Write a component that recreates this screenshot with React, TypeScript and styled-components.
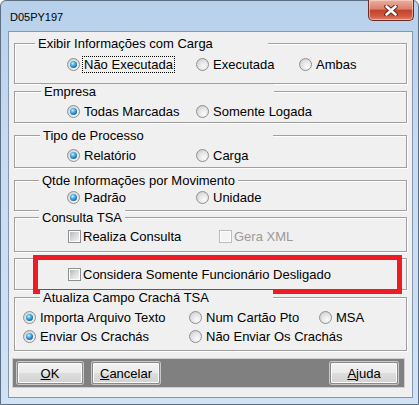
import React from 'react';
import styled, { createGlobalStyle } from 'styled-components';

const GlobalStyle = createGlobalStyle`
  html, body {
    margin: 0;
    padding: 0;
    background: #ffffff;
  }

  body {
    font-family: "Liberation Sans", Arial, sans-serif;
    font-size: 13px;
    color: #000;
  }
`;

const Window = styled.div`
  width: 419px;
  height: 405px;
  box-sizing: border-box;
  padding: 0 5px 6px 7px;
  display: flex;
  flex-direction: column;
  border: 1px solid #5c6f85;
  border-radius: 6px 6px 0 0;
  background: linear-gradient(180deg, #b8d0ea 0%, #c7dbf1 35%, #d0e2f4 100%);
`;

const TitleBar = styled.div`
  height: 30px;
  display: flex;
  flex-direction: row;
  align-items: flex-start;
  justify-content: space-between;
`;

const Caption = styled.div`
  font-size: 11px;
  line-height: 14px;
  margin: 9px 0 0 2px;
`;

const CloseButton = styled.div`
  width: 46px;
  height: 21px;
  box-sizing: border-box;
  margin: -1px -1px 0 0;
  display: flex;
  align-items: center;
  justify-content: center;
  border: 1px solid #6b2b22;
  border-top: none;
  border-radius: 0 0 5px 5px;
  background: linear-gradient(180deg, #eab0a3 0%, #dc7f6b 45%, #c4432b 52%, #cf5a40 80%, #dc8270 100%);
  box-shadow: inset 0 0 0 1px rgba(255, 220, 210, 0.55);
`;

const Client = styled.div`
  flex: 1;
  display: flex;
  flex-direction: column;
  padding: 0 5px;
  border: 1px solid #8497ad;
  background: #f0f0f0;
`;

const GroupBox = styled.div<{ $top: number; $h: number }>`
  position: relative;
  box-sizing: border-box;
  margin-top: ${({ $top }) => $top}px;
  height: ${({ $h }) => $h}px;
  border: 1px solid #a0a0a0;
  box-shadow: 1px 1px 0 #ffffff, inset 1px 1px 0 #ffffff;
`;

const GroupTitle = styled.span<{ $left: number; $w?: number }>`
  position: absolute;
  top: -8px;
  left: ${({ $left }) => $left}px;
  min-width: ${({ $w }) => ($w ? `${$w}px` : 'auto')};
  box-sizing: border-box;
  padding: 0 3px;
  line-height: 15px;
  background: #f0f0f0;
  white-space: nowrap;
`;

const Row = styled.div<{ $top: number; $left: number }>`
  display: flex;
  flex-direction: row;
  align-items: center;
  height: 17px;
  margin-top: ${({ $top }) => $top}px;
  padding-left: ${({ $left }) => $left}px;
`;

const Option = styled.div<{ $w?: number }>`
  display: flex;
  flex-direction: row;
  align-items: center;
  width: ${({ $w }) => ($w ? `${$w}px` : 'auto')};
  flex-shrink: 0;
`;

const RadioDot = styled.span<{ $on?: boolean }>`
  width: 13px;
  height: 13px;
  box-sizing: border-box;
  flex-shrink: 0;
  display: flex;
  align-items: center;
  justify-content: center;
  border-radius: 50%;
  border: 1px solid #8e8f8f;
  background: radial-gradient(circle at 65% 70%, #fbfbfb 0%, #e6e6e6 45%, #c8c8c8 100%);

  &::after {
    content: '';
    display: ${({ $on }) => ($on ? 'block' : 'none')};
    width: 7px;
    height: 7px;
    border-radius: 50%;
    background: radial-gradient(circle at 40% 35%, #d4f4ff 0%, #52b8ec 30%, #1f6bb0 70%, #143f72 100%);
  }
`;

const CheckBox = styled.span<{ $disabled?: boolean }>`
  position: relative;
  width: 13px;
  height: 13px;
  box-sizing: border-box;
  flex-shrink: 0;
  border: 1px solid ${({ $disabled }) => ($disabled ? '#bcbcbc' : '#8e8f8f')};
  background: #fdfdfd;

  &::after {
    content: '';
    position: absolute;
    inset: 1px;
    background: ${({ $disabled }) =>
      $disabled ? '#f4f4f4' : 'linear-gradient(135deg, #b4b8bd 0%, #dcdddf 55%, #f2f2f2 100%)'};
  }
`;

const Label = styled.span<{ $gap: number; $focus?: boolean; $disabled?: boolean }>`
  margin-left: ${({ $gap }) => $gap}px;
  padding: 0 1px;
  line-height: 15px;
  white-space: nowrap;
  border: 1px dotted ${({ $focus }) => ($focus ? '#000000' : 'transparent')};
  color: ${({ $disabled }) => ($disabled ? '#9a9a9a' : '#000000')};
`;

const Highlight = styled.div`
  position: absolute;
  left: 18px;
  top: -4px;
  width: 369px;
  height: 39px;
  box-sizing: border-box;
  border: 5px solid #ed1c24;
`;

const ButtonBar = styled.div`
  margin: 7px 0 0 -2px;
  width: 393px;
  height: 30px;
  box-sizing: border-box;
  display: flex;
  flex-direction: row;
  align-items: center;
  padding: 0 6px 0 4px;
  border: 1px solid #cfcfcf;
  background: #808080;
`;

const Button = styled.div<{ $w: number; $gap?: number; $push?: boolean }>`
  width: ${({ $w }) => $w}px;
  height: 22px;
  box-sizing: border-box;
  margin-left: ${({ $push, $gap }) => ($push ? 'auto' : `${$gap ?? 0}px`)};
  display: flex;
  align-items: center;
  justify-content: center;
  border: 1px solid #8a8a8a;
  border-radius: 2px;
  box-shadow: 0 0 0 1px #c9c9c9, inset 0 0 0 1px #fafafa;
  background: linear-gradient(180deg, #f3f3f3 0%, #ebebeb 48%, #dddddd 52%, #d2d2d2 100%);
  line-height: 15px;

  u {
    text-decoration: underline;
  }
`;

type Opt = { label: string; w?: number; on?: boolean; focus?: boolean };

const RadioRow: React.FC<{ top: number; left: number; items: Opt[] }> = ({ top, left, items }) => (
  <Row $top={top} $left={left}>
    {items.map((o) => (
      <Option key={o.label} $w={o.w}>
        <RadioDot $on={o.on} />
        <Label $gap={2} $focus={o.focus}>
          {o.label}
        </Label>
      </Option>
    ))}
  </Row>
);

const CloseGlyph = () => (
  <svg width="14" height="11" viewBox="0 0 14 11">
    <path d="M2.5 1.5 L11.5 9.5 M11.5 1.5 L2.5 9.5" stroke="#5a2119" strokeWidth="4.4" strokeLinecap="round" />
    <path d="M2.5 1.5 L11.5 9.5 M11.5 1.5 L2.5 9.5" stroke="#ffffff" strokeWidth="2.6" strokeLinecap="round" />
  </svg>
);

export default function App() {
  return (
    <>
      <GlobalStyle />
      <Window>
        <TitleBar>
          <Caption>D05PY197</Caption>
          <CloseButton>
            <CloseGlyph />
          </CloseButton>
        </TitleBar>

        <Client>
          <GroupBox $top={11} $h={41}>
            <GroupTitle $left={20} $w={233}>
              Exibir Informações com Carga
            </GroupTitle>
            <RadioRow
              top={12}
              left={52}
              items={[
                { label: 'Não Executada', w: 129, on: true, focus: true },
                { label: 'Executada', w: 103 },
                { label: 'Ambas' },
              ]}
            />
          </GroupBox>

          <GroupBox $top={7} $h={32}>
            <GroupTitle $left={26} $w={233}>
              Empresa
            </GroupTitle>
            <RadioRow
              top={11}
              left={52}
              items={[
                { label: 'Todas Marcadas', w: 129, on: true },
                { label: 'Somente Logada' },
              ]}
            />
          </GroupBox>

          <GroupBox $top={12} $h={33}>
            <GroupTitle $left={25} $w={233}>
              Tipo de Processo
            </GroupTitle>
            <RadioRow
              top={11}
              left={52}
              items={[
                { label: 'Relatório', w: 129, on: true },
                { label: 'Carga' },
              ]}
            />
          </GroupBox>

          <GroupBox $top={12} $h={31}>
            <GroupTitle $left={24}>Qtde Informações por Movimento</GroupTitle>
            <RadioRow
              top={8}
              left={52}
              items={[
                { label: 'Padrão', w: 129, on: true },
                { label: 'Unidade' },
              ]}
            />
          </GroupBox>

          <GroupBox $top={6} $h={35}>
            <GroupTitle $left={24}>Consulta TSA</GroupTitle>
            <Row $top={10} $left={53}>
              <Option $w={151}>
                <CheckBox />
                <Label $gap={0}>Realiza Consulta</Label>
              </Option>
              <Option>
                <CheckBox $disabled />
                <Label $gap={0} $disabled>
                  Gera XML
                </Label>
              </Option>
            </Row>
          </GroupBox>

          <GroupBox $top={6} $h={32}>
            <Row $top={7} $left={53}>
              <Option>
                <CheckBox />
                <Label $gap={0}>Considera Somente Funcionário Desligado</Label>
              </Option>
            </Row>
            <Highlight />
          </GroupBox>

          <GroupBox $top={7} $h={54}>
            <GroupTitle $left={25} $w={233}>
              Atualiza Campo Crachá TSA
            </GroupTitle>
            <RadioRow
              top={11}
              left={8}
              items={[
                { label: 'Importa Arquivo Texto', w: 166, on: true },
                { label: 'Num Cartão Pto', w: 130 },
                { label: 'MSA' },
              ]}
            />
            <RadioRow
              top={2}
              left={8}
              items={[
                { label: 'Enviar Os Crachás', w: 166, on: true },
                { label: 'Não Enviar Os Crachás' },
              ]}
            />
          </GroupBox>

          <ButtonBar>
            <Button $w={66}>
              <span>
                <u>O</u>K
              </span>
            </Button>
            <Button $w={68} $gap={9}>
              <span>
                <u>C</u>ancelar
              </span>
            </Button>
            <Button $w={68} $push>
              <span>
                <u>A</u>juda
              </span>
            </Button>
          </ButtonBar>
        </Client>
      </Window>
    </>
  );
}
